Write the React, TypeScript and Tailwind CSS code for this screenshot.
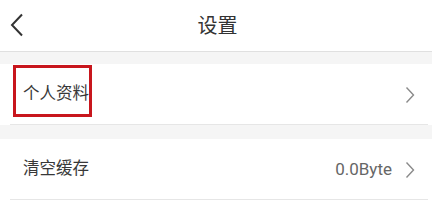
import { ReactNode } from 'react'

function Chevron() {
  return (
    <svg width="10" height="18" viewBox="0 0 10 18" fill="none" className="shrink-0">
      <path d="M1.5 1.5 L8.5 9 L1.5 16.5" stroke="#8a8a8a" strokeWidth="1.4" />
    </svg>
  )
}

function Row({ label, value, children }: { label: string; value?: string; children?: ReactNode }) {
  return (
    <div className="relative bg-white">
      <div className="flex h-[60px] items-center pl-[23px] pr-[17px] pt-px">
        <span className="flex-1 text-[16.5px] text-[#383838]">{label}</span>
        {value && <span className="mr-[13px] text-[17px] text-[#666]">{value}</span>}
        <Chevron />
      </div>
      <div className="ml-[10px] mr-[4px] h-px bg-[#e6e6e6]" />
      {children}
    </div>
  )
}

export default function App() {
  return (
    <div
      className="min-h-[209px] w-[432px] bg-white"
      style={{ fontFamily: 'Roboto, "Noto Sans CJK SC", sans-serif' }}
    >
      <div className="relative flex h-[52px] items-center justify-center border-b border-[#e0e0e0]">
        <svg
          width="14"
          height="24"
          viewBox="0 0 14 24"
          fill="none"
          className="absolute left-[10px] top-[13px]"
        >
          <path d="M12 1.5 L2 12 L12 22.5" stroke="#333" strokeWidth="2" />
        </svg>
        <span className="pl-[3px] text-[20px] text-[#333]">设置</span>
      </div>
      <div className="h-[12px] bg-[#f5f5f5]" />
      <Row label="个人资料">
        <div className="absolute left-[13px] top-[1px] h-[52px] w-[79px] border-[3px] border-[#c8161d]" />
      </Row>
      <div className="h-[14px] bg-[#f5f5f5]" />
      <Row label="清空缓存" value="0.0Byte" />
    </div>
  )
}
